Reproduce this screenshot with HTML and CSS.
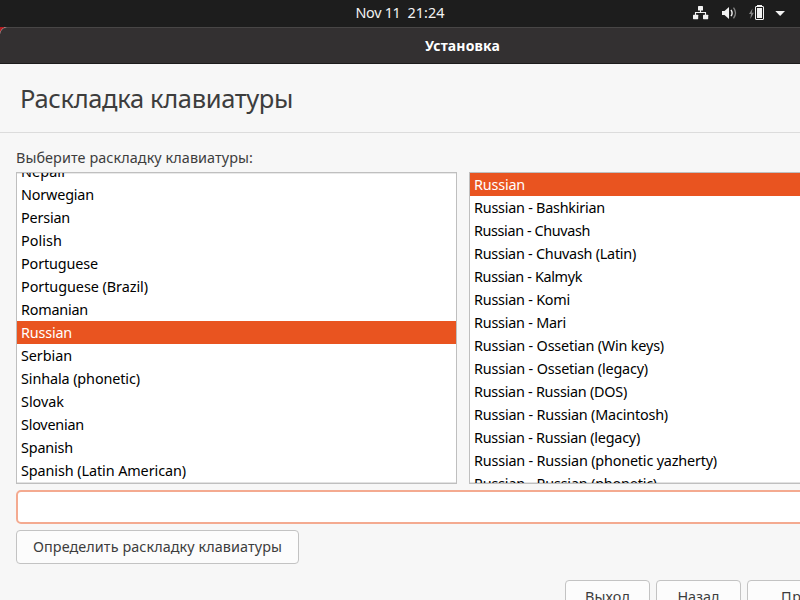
FILE: index.html
```
<!DOCTYPE html>
<html lang="ru">
<head>
<meta charset="utf-8">
<title>Установка</title>
<link rel="stylesheet" href="styles.css">
</head>
<body>
<header class="topbar">
  <div class="clock"><span data-width="45">Nov 11</span><span data-width="37">21:24</span></div>
  <svg class="tray" width="100" height="27" viewBox="0 0 100 27" fill="#f2f2f2">
    <rect x="8" y="6" width="5" height="4.500" rx=".6"/>
    <rect x="3" y="14.700" width="5.200" height="4.500" rx=".6"/>
    <rect x="13" y="14.700" width="5.200" height="4.500" rx=".6"/>
    <path d="M10.500 10v2.500M5.500 15v-2.500h10V15" fill="none" stroke="#f2f2f2" stroke-width="1.1"/>
    <path d="M32 11h2.500L39 7v12l-4.500-4H32z"/>
    <path d="M41 9.800q2.200 3.200 0 6.400" fill="none" stroke="#f2f2f2" stroke-width="1.400"/>
    <path d="M43.500 7.700q4 5.300 0 10.600" fill="none" stroke="#858585" stroke-width="1.300"/>
    <path d="M62.500 8.500L59 14h2l-.7 5 3.500-6.200h-2z" fill="#858585"/>
    <path d="M67 5h5v1.200h-5z"/>
    <rect x="65.500" y="6.500" width="8" height="13" rx=".5" fill="none" stroke="#f2f2f2"/>
    <path d="M67 8h5v10h-5z"/>
    <path d="M85.300 11h9.700l-4.850 5z"/>
  </svg>
</header>
<section class="window">
  <div class="titlebar"><span data-width="75">Установка</span></div>
  <h1 class="heading"><span data-width="273">Раскладка клавиатуры</span></h1>
  <main class="page">
    <label class="prompt"><span data-width="237">Выберите раскладку клавиатуры:</span></label>
    <div class="lists">
      <ul class="list scrolled">
        <li><span data-width="44">Nepali</span></li>
        <li><span data-width="73">Norwegian</span></li>
        <li><span data-width="49">Persian</span></li>
        <li><span data-width="41">Polish</span></li>
        <li><span data-width="77">Portuguese</span></li>
        <li><span data-width="127">Portuguese (Brazil)</span></li>
        <li><span data-width="67">Romanian</span></li>
        <li class="selected"><span data-width="51">Russian</span></li>
        <li><span data-width="51">Serbian</span></li>
        <li><span data-width="119">Sinhala (phonetic)</span></li>
        <li><span data-width="43">Slovak</span></li>
        <li><span data-width="63">Slovenian</span></li>
        <li><span data-width="52">Spanish</span></li>
        <li><span data-width="165">Spanish (Latin American)</span></li>
      </ul>
      <ul class="list variants">
        <li class="selected"><span data-width="51">Russian</span></li>
        <li><span data-width="131">Russian - Bashkirian</span></li>
        <li><span data-width="116">Russian - Chuvash</span></li>
        <li><span data-width="162">Russian - Chuvash (Latin)</span></li>
        <li><span data-width="108">Russian - Kalmyk</span></li>
        <li><span data-width="96">Russian - Komi</span></li>
        <li><span data-width="92">Russian - Mari</span></li>
        <li><span data-width="190">Russian - Ossetian (Win keys)</span></li>
        <li><span data-width="174">Russian - Ossetian (legacy)</span></li>
        <li><span data-width="153">Russian - Russian (DOS)</span></li>
        <li><span data-width="194">Russian - Russian (Macintosh)</span></li>
        <li><span data-width="166">Russian - Russian (legacy)</span></li>
        <li><span data-width="243">Russian - Russian (phonetic yazherty)</span></li>
        <li><span data-width="183">Russian - Russian (phonetic)</span></li>
      </ul>
    </div>
    <input class="entry" type="text">
    <button class="button detect"><span data-width="249">Определить раскладку клавиатуры</span></button>
    <div class="actions">
      <button class="button"><span data-width="45">Выход</span></button>
      <button class="button"><span data-width="42">Назад</span></button>
      <button class="button next"><span data-width="94">Продолжить</span></button>
    </div>
  </main>
</section>
<script src="fit.js"></script>
</body>
</html>
```

FILE: styles.css
```
* { box-sizing: border-box; }

body {
  margin: 0;
  width: 800px;
  height: 600px;
  overflow: hidden;
  background: #b01c20;
  color: #3d3d3d;
  font: 14.4px/23px "Noto Sans", "Open Sans", sans-serif;
}

span { display: inline-block; white-space: pre; }

.topbar {
  display: grid;
  grid-template-columns: 1fr auto 1fr;
  height: 27px;
  background: #1d1d1d;
  color: #f2f2f2;
}

.clock {
  grid-column: 2;
  display: flex;
  gap: 7px;
  line-height: 26px;
}

.tray { justify-self: end; margin-right: 10px; }

.window {
  width: 925px;
  height: 573px;
  overflow: hidden;
  background: #f7f7f7;
  border-radius: 7px 7px 0 0;
}

.titlebar {
  height: 37px;
  border-top: 1px solid #484646;
  border-bottom: 1px solid #1c1b1b;
  border-radius: 7px 7px 0 0;
  background: #333031;
  color: #fff;
  font-size: 14px;
  font-weight: 700;
  line-height: 36px;
  text-align: center;
}

.heading {
  margin: 0;
  height: 69px;
  padding-left: 20px;
  border-bottom: 1px solid #dcdcdc;
  font-size: 25.5px;
  font-weight: 400;
  line-height: 69px;
}

.page {
  display: flex;
  flex-direction: column;
  padding: 13px 16px 0;
}

.prompt { height: 26px; line-height: 23px; }

.lists {
  display: grid;
  grid-template-columns: 441px 441px;
  gap: 12px;
}

.list {
  height: 312px;
  margin: 0;
  padding: 0;
  overflow: hidden;
  list-style: none;
  border: 1px solid #bfbfbf;
  background: #fff;
  box-shadow: inset 0 1px #e9e9e9, inset 0 -1px #e2e2e2;
  color: #000;
}

.list li { height: 23px; padding-left: 4px; }

.scrolled li:first-child { margin-top: -13px; }

.list .selected { background: #e95420; color: #fff; }

.entry {
  height: 34px;
  margin: 6px 0;
  border: 2px solid #f4aa90;
  border-radius: 5px;
  background: #fff;
}

.button {
  width: 85px;
  height: 34px;
  padding: 0;
  border: 1px solid #c3c3c3;
  border-radius: 4px;
  background: #fcfcfc;
  color: inherit;
  font: inherit;
  line-height: 32px;
}

.detect { width: 283px; }

.actions {
  display: flex;
  gap: 6px;
  margin: 16px 0 0 549px;
}

.next { width: 162px; }
```

FILE: fit.js
```
// Tracks each label so that it fills its nominal width.
document.querySelectorAll("[data-width]").forEach((label) => {
  const target = Number(label.dataset.width);
  const natural = label.getBoundingClientRect().width;
  label.style.letterSpacing = (target - natural) / label.textContent.length + "px";
});
```
